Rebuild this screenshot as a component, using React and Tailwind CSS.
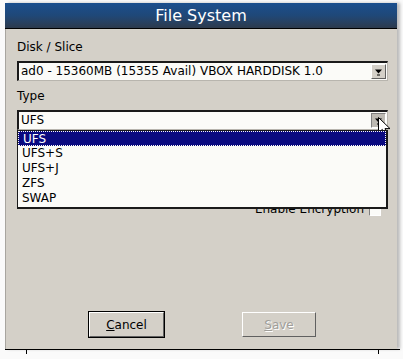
import React from "react";

function Arrow({ pressed }) {
  return (
    <div
      className={`w-[15px] h-[15px] flex items-center justify-center border ${
        pressed
          ? "bg-[#bdbab3] border-t-[#808080] border-l-[#808080] border-b-white border-r-white"
          : "bg-[#d4d0c8] border-t-white border-l-white border-b-[#606060] border-r-[#606060]"
      }`}
    >
      <svg width="9" height="8" viewBox="0 0 9 8">
        <path d="M1 1.5 H8 L4.5 5.5 Z" fill="#000" />
        <rect x="3" y="6.5" width="3" height="1" fill="#000" />
      </svg>
    </div>
  );
}

function Select({ value, pressed }) {
  return (
    <div className="h-[20px] flex items-center bg-[#fbfbf8] border-t-[2px] border-l-[2px] border-t-[#1a1a1a] border-l-[#1a1a1a] border-b border-r border-b-[#b8b5ae] border-r-[#b8b5ae] pl-[2px] pr-[1px]">
      <span className="flex-1 text-[12px] leading-[15px] text-black whitespace-nowrap">{value}</span>
      <Arrow pressed={pressed} />
    </div>
  );
}

export default function App() {
  const items = ["UFS", "UFS+S", "UFS+J", "ZFS", "SWAP"];
  return (
    <div
      className="w-[403px] h-[359px] bg-[#fafafa] relative overflow-hidden pt-[3px]"
      style={{ fontFamily: '"DejaVu Sans", Verdana, sans-serif' }}
    >
      <div className="ml-[5px] w-[392px] h-[346px] flex flex-col shadow-[3px_0_3px_rgba(0,0,0,0.25)]">
        <div className="h-[26px] bg-gradient-to-b from-[#1b4f8e] via-[#1f4878] to-[#2c3a4c] border-b border-black flex items-center justify-center">
          <span className="text-white text-[16px] leading-[20px]">File System</span>
        </div>
        <div className="flex-1 bg-[#d4d0c8] border-l border-[#a8a59f] pl-[11px] pr-[9px] flex flex-col relative">
          <div className="mt-[11px] text-[12px] leading-[15px] text-black">Disk / Slice</div>
          <div className="mt-[6px]">
            <Select value="ad0 - 15360MB (15355 Avail) VBOX HARDDISK 1.0" />
          </div>
          <div className="mt-[8px] text-[12px] leading-[15px] text-black">Type</div>
          <div className="mt-[6px] relative">
            <Select value="UFS" pressed />
            <div className="absolute left-0 top-[20px] w-[371px] bg-[#fbfbf8] border border-[#1a1a1a] border-r-[2px] border-b-[2px] z-10 pb-[1px]">
              {items.map((it, i) => (
                <div
                  key={it}
                  className={`h-[15px] pl-[4px] text-[12px] leading-[15px] ${
                    i === 0
                      ? "bg-[#0a0a80] text-white border border-dotted border-[#fbfbf8] leading-[13px] pl-[3px]"
                      : "text-black"
                  }`}
                >
                  {it}
                </div>
              ))}
            </div>
          </div>
          <div className="mt-[72px] flex items-center justify-end pr-[7px]">
            <span className="text-[12px] leading-[15px] text-black mr-[5px]">Enable Encryption</span>
            <div className="w-[12px] h-[12px] bg-[#fbfbf8] border border-t-[#808080] border-l-[#808080] border-b-white border-r-white" />
          </div>
          <div className="flex-1" />
          <div className="flex mb-[11px] pl-[71px]">
            <div className="w-[77px] h-[27px] border border-black">
              <div className="w-full h-full bg-[#d4d0c8] border border-t-white border-l-white border-b-[#606060] border-r-[#606060] flex items-center justify-center text-[12px] text-black">
                <span><span className="underline">C</span>ancel</span>
              </div>
            </div>
            <div className="ml-[77px] mt-[1px] w-[74px] h-[25px] bg-[#d4d0c8] border border-t-white border-l-white border-b-[#606060] border-r-[#606060] flex items-center justify-center text-[12px] text-[#a09e99] [text-shadow:1px_1px_0_#ffffff]">
              <span><span className="underline">S</span>ave</span>
            </div>
          </div>
        </div>
      </div>
      <div className="ml-[5px] w-[395px] border-t border-black flex justify-between px-[21px]">
        <div className="w-px h-[4px] bg-black" />
        <div className="w-px h-[4px] bg-black" />
      </div>
      <svg
        className="absolute left-[378px] top-[117px]"
        width="14"
        height="22"
        viewBox="0 0 14 22"
      >
        <path
          d="M0.5 0.5 L0.5 16 L4.3 12.4 L7 19 L9.6 18 L7 11.6 L12 11.6 Z"
          fill="#fff"
          stroke="#000"
          strokeWidth="1"
          strokeLinejoin="round"
        />
      </svg>
    </div>
  );
}
